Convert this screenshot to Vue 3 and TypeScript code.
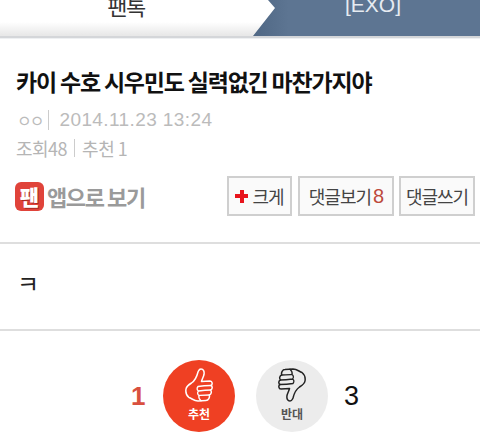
<template>
  <div class="page">
    <div class="tabs">
      <div class="tab-left"><span>팬톡</span></div>
      <div class="tab-right"><span>[EXO]</span></div>
    </div>

    <div class="head">
      <h1 class="title">카이 수호 시우민도 실력없긴 마찬가지야</h1>
      <div class="meta-date"><span class="nick">ㅇㅇ</span><i class="sep"></i><span class="date">2014.11.23 13:24</span></div>
      <div class="meta-count">조회48<i class="sep small"></i>추천 1</div>
    </div>

    <div class="tools">
      <div class="app-link">
        <span class="app-icon"><span>팬</span></span>
        <span class="app-text">앱으로 보기</span>
      </div>
      <div class="btns">
        <button class="btn btn-big"><b class="plus"></b>크게</button>
        <button class="btn btn-view">댓글보기<em>8</em></button>
        <button class="btn btn-write">댓글쓰기</button>
      </div>
    </div>

    <div class="body">ㅋ</div>

    <div class="votes">
      <span class="count up">{{ upCount }}</span>
      <div class="circle red">
        <svg class="thumb" viewBox="0 0 28 34" width="28" height="34">
          <path :d="THUMB_OUTLINE" fill="none" stroke="#fff" stroke-width="1.5" stroke-linejoin="round" />
          <path :d="THUMB_FINGERS" fill="none" stroke="#fff" stroke-width="1.3" stroke-linecap="round" />
        </svg>
        <span class="label">추천</span>
      </div>
      <div class="circle grey">
        <svg class="thumb" viewBox="0 0 28 34" width="28" height="34">
          <g transform="rotate(180 14 17)">
            <path :d="THUMB_OUTLINE" fill="none" stroke="#222" stroke-width="1.5" stroke-linejoin="round" />
            <path :d="THUMB_FINGERS" fill="none" stroke="#222" stroke-width="1.3" stroke-linecap="round" />
          </g>
        </svg>
        <span class="label">반대</span>
      </div>
      <span class="count down">{{ downCount }}</span>
    </div>
  </div>
</template>

<script setup lang="ts">
const upCount = 1
const downCount = 3

// same hand for both buttons, the grey one is turned upside down
const THUMB_OUTLINE =
  'M13 4C14 2 14 1 16 1C18.500 1 19.500 3.500 19 6.500C18.500 9 17 11 16.500 13.500L25 13C27.500 13 27.800 16.500 26 17.500C27.800 18.500 27.500 21.500 25.500 22C27 23.500 26.300 26.500 24.300 27C25 29.500 23.500 32.500 21 32.500L13 33C9 33 7 30.500 4 29.500C1.500 27.500 0.500 24 1 21C1.500 18 4 16.500 6.500 15C9.500 13 12 8 13 4Z'
const THUMB_FINGERS =
  'M13 18.500C16 18 22 17.500 26 17.500M13.500 23C17 22.500 22 22 25.500 22M14 27.500C17 27.300 21 27 24.300 27M13 18.500C11.500 20.500 12 22 13.500 23C12 24.500 12.500 26.500 14 27.500C13.500 29 14 31 16 32.800'
</script>

<style>
html, body {
  margin: 0;
  background: #fff;
}
</style>

<style scoped>
.page {
  width: 480px;
  height: 442px;
  overflow: hidden;
  font-family: "Noto Sans CJK KR", "Liberation Sans", sans-serif;
  background: #fff;
}

.tabs {
  display: flex;
  height: 38px;
  box-sizing: border-box;
  background: linear-gradient(#fff 0, #fff 22px, #e8e8e8 35px);
  border-bottom: 2px solid #d4d6d9;
  box-shadow: 0 1px 0 #eef0f2;
}

.tab-left {
  width: 240px;
  display: flex;
  justify-content: center;
  font-size: 22px;
  letter-spacing: -1.5px;
  line-height: 24px;
  color: #333;
  padding-left: 12px;
  box-sizing: border-box;
  overflow: hidden;
}

.tab-left span {
  margin-top: -7px;
}

.tab-right {
  flex: 1;
  height: 36px;
  margin-left: 12px;
  background: linear-gradient(90deg, #4f6784, #5d7592 16%);
  clip-path: polygon(16px 0, 480px 0, 480px 100%, 1px 100%, 23px 8px);
  display: flex;
  justify-content: center;
  color: #e6ebf1;
  font-family: "Liberation Sans", sans-serif;
  font-size: 21px;
  line-height: 24px;
  overflow: hidden;
}

.tab-right span {
  margin-top: -7px;
  transform: translateX(7px);
}

.head {
  padding: 26px 16px 0;
}

.title {
  margin: 0;
  font-size: 23px;
  font-weight: 700;
  letter-spacing: -1.2px;
  line-height: 34px;
  color: #111;
  white-space: nowrap;
}

.meta-date {
  display: flex;
  align-items: center;
  margin-top: 9px;
  height: 26px;
  font-size: 19px;
  color: #bbb;
  font-family: "Liberation Sans", "Noto Sans CJK KR", sans-serif;
}

.nick {
  font-size: 16px;
  letter-spacing: -2px;
  margin-left: 1px;
}

.date {
  letter-spacing: 0.4px;
}

.sep {
  display: inline-block;
  width: 1px;
  height: 20px;
  background: #ccc;
  margin: 0 10px 0 6px;
}

.sep.small {
  height: 18px;
  margin: 0 7px;
}

.meta-count {
  display: flex;
  align-items: center;
  margin-top: 3px;
  height: 24px;
  font-size: 18px;
  letter-spacing: -0.5px;
  color: #b5b5b5;
  white-space: nowrap;
}

.tools {
  display: flex;
  justify-content: space-between;
  align-items: center;
  margin-top: 16px;
  padding: 0 5px 0 15px;
  height: 40px;
}

.app-link {
  display: flex;
  align-items: center;
  gap: 3px;
}

.app-icon {
  width: 29px;
  height: 29px;
  border-radius: 6px;
  background: #e0433a;
  display: flex;
  align-items: center;
  justify-content: center;
  color: #fff;
  font-size: 21px;
  font-weight: 900;
  line-height: 1;
  text-shadow: 1px 1px 0 #a82a22;
}

.app-text {
  font-size: 22px;
  font-weight: 700;
  letter-spacing: -1.4px;
  color: #9a9a9a;
}

.btns {
  display: flex;
  gap: 5px;
}

.btn {
  height: 40px;
  padding: 0;
  background: #fafafa;
  border: 2px solid #cfcfcf;
  font-family: inherit;
  font-size: 18px;
  letter-spacing: -1px;
  color: #444;
  display: flex;
  align-items: center;
  justify-content: center;
  box-sizing: border-box;
}

.btn-big { width: 65px; margin-right: 1px; }
.btn-view { width: 96px; }
.btn-write { width: 76px; }

.plus {
  width: 13px;
  height: 13px;
  margin-right: 4px;
  background:
    linear-gradient(#e8141c, #e8141c) center / 13px 4px no-repeat,
    linear-gradient(#e8141c, #e8141c) center / 4px 13px no-repeat;
}

.btn em {
  font-style: normal;
  font-family: "Liberation Sans", sans-serif;
  font-size: 20px;
  color: #bd4a3c;
  margin-left: 2px;
}

.body {
  margin-top: 26px;
  border-top: 2px solid #dedede;
  border-bottom: 2px solid #dedede;
  height: 61px;
  padding: 24px 17px 0;
  font-size: 24px;
  line-height: 30px;
  color: #222;
}

.votes {
  display: flex;
  align-items: center;
  margin-top: 29px;
}

.count {
  font-family: "Liberation Sans", sans-serif;
  font-size: 27px;
  width: 30px;
}

.count.up {
  color: #d9503f;
  margin-left: 131px;
  font-size: 26px;
  font-weight: 700;
  width: 32px;
}

.count.down {
  color: #111;
  margin-left: 16px;
}

.circle {
  width: 72px;
  height: 72px;
  border-radius: 50%;
  display: flex;
  flex-direction: column;
  align-items: center;
  padding-top: 8px;
  box-sizing: border-box;
}

.circle.red {
  background: #ef4023;
  color: #fff;
}

.circle.grey {
  background: #ececec;
  color: #555;
  margin-left: 21px;
}

.thumb {
  display: block;
  flex: none;
}

.label {
  font-size: 12px;
  font-weight: 700;
  line-height: 16px;
  margin-top: 4px;
}
</style>
